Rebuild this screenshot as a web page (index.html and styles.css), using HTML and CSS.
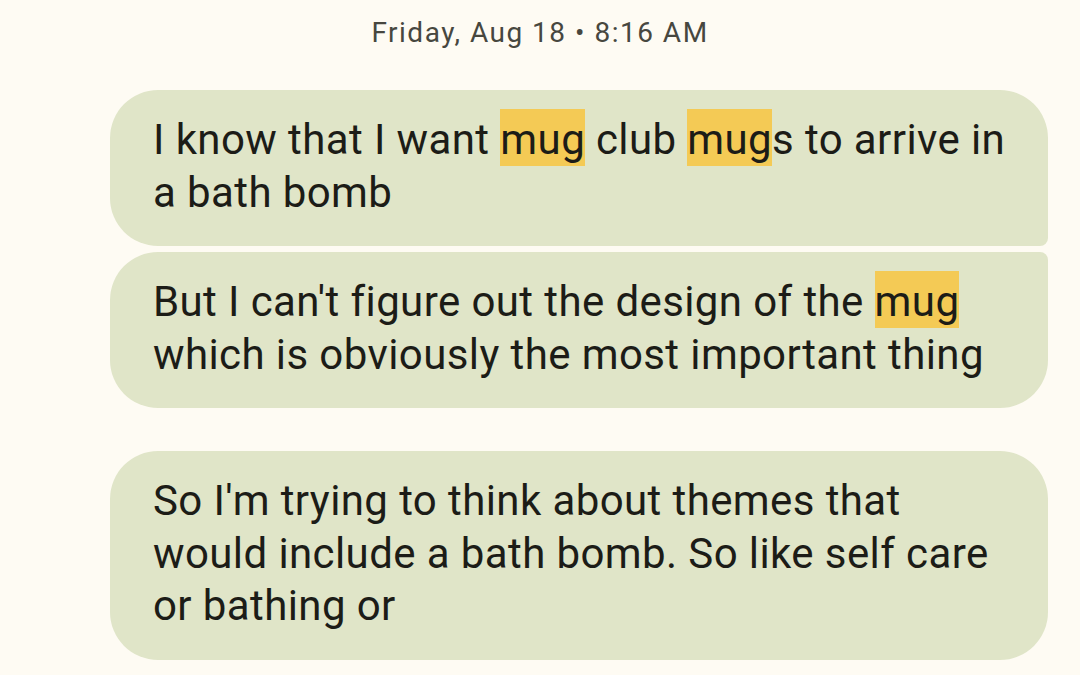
FILE: index.html
```html
<!DOCTYPE html>
<html>
<head>
<meta charset="utf-8">
<link rel="stylesheet" href="styles.css">
</head>
<body>
<div class="stamp">Friday, Aug 18 • 8:16 AM</div>
<div class="chat">
  <div class="group">
    <div class="bubble first">I know that I want <mark>mug</mark> club <mark>mug</mark>s to arrive in a bath bomb</div>
    <div class="bubble last">But I can't figure out the design of the <mark>mug</mark> which is obviously the most important thing</div>
  </div>
  <div class="group">
    <div class="bubble">So I'm trying to think about themes that would include a bath bomb. So like self care or bathing or</div>
  </div>
</div>
</body>
</html>
```
FILE: styles.css
```css
html, body {
  margin: 0;
  padding: 0;
  background: #fefbf3;
}
body {
  width: 1080px;
  height: 675px;
  overflow: hidden;
  font-family: Roboto, "Noto Sans", sans-serif;
  color: #1c1c17;
}
.stamp {
  text-align: center;
  font-size: 28px;
  letter-spacing: 1.5px;
  line-height: 36px;
  color: #47473f;
  padding-top: 15px;
  height: 90px;
  box-sizing: border-box;
}
.chat {
  display: flex;
  flex-direction: column;
  gap: 43px;
  padding: 0 32px 0 110px;
}
.group {
  display: flex;
  flex-direction: column;
  gap: 6px;
}
.bubble {
  background: #e0e5c8;
  border-radius: 48px;
  padding: 24px 36px 27px 43px;
  font-size: 42px;
  line-height: 52.5px;
  letter-spacing: 0.4px;
}
.bubble.first { border-bottom-right-radius: 8px; }
.bubble.last { border-top-right-radius: 8px; }
mark {
  background: #f4ca55;
  color: inherit;
  padding: 6px 0 2px;
}
```
